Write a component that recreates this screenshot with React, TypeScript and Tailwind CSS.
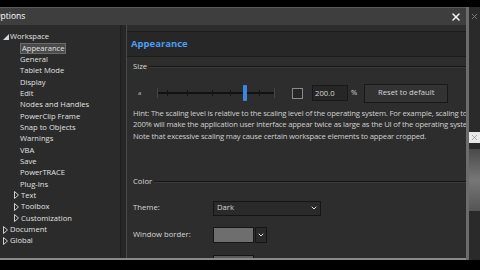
import { ChevronDown, X } from "lucide-react"

const font = { fontFamily: '"Open Sans", "Noto Sans", sans-serif' }

type Node = { label: string; level: number; state?: "open" | "closed"; selected?: boolean }

const tree: Node[] = [
  { label: "Workspace", level: 0, state: "open" },
  { label: "Appearance", level: 1, selected: true },
  { label: "General", level: 1 },
  { label: "Tablet Mode", level: 1 },
  { label: "Display", level: 1 },
  { label: "Edit", level: 1 },
  { label: "Nodes and Handles", level: 1 },
  { label: "PowerClip Frame", level: 1 },
  { label: "Snap to Objects", level: 1 },
  { label: "Warnings", level: 1 },
  { label: "VBA", level: 1 },
  { label: "Save", level: 1 },
  { label: "PowerTRACE", level: 1 },
  { label: "Plug-Ins", level: 1 },
  { label: "Text", level: 1, state: "closed" },
  { label: "Toolbox", level: 1, state: "closed" },
  { label: "Customization", level: 1, state: "closed" },
  { label: "Document", level: 0, state: "closed" },
  { label: "Global", level: 0, state: "closed" },
]

function Arrow({ state }: { state?: "open" | "closed" }) {
  if (state === "open")
    return (
      <svg width="6" height="6" viewBox="0 0 6 6" className="mr-[1px]">
        <polygon points="6,0 6,6 0,6" fill="#d8d8d8" />
      </svg>
    )
  if (state === "closed")
    return (
      <svg width="5" height="8" viewBox="0 0 5 8" className="mr-[2px]">
        <polygon points="0.5,0.5 4.5,4 0.5,7.5" fill="none" stroke="#cfcfcf" strokeWidth="1" />
      </svg>
    )
  return null
}

function Tree() {
  return (
    <div className="w-[120px] shrink-0 bg-[#2b2b2b] pt-[6px] text-[7.6px] text-[#e0e0e0]">
      {tree.map((n) => {
        const pad = n.level === 0 ? (n.state ? 3 : 10) : n.state ? 14 : 20
        return (
          <div key={n.label} className="flex h-[11.35px] items-center whitespace-nowrap" style={{ paddingLeft: pad }}>
            <Arrow state={n.state} />
            <span
              className={
                n.selected
                  ? "bg-[#4a4a4a] border border-[#6a6a6a] px-[1px] leading-[9px]"
                  : "leading-[9px]"
              }
            >
              {n.label}
            </span>
          </div>
        )
      })}
    </div>
  )
}

function GroupLabel({ text }: { text: string }) {
  return (
    <div className="flex items-center gap-[2px] pl-[6px] text-[7.7px] text-[#d8d8d8]">
      <span>{text}</span>
      <div className="flex-1 flex flex-col">
        <div className="h-px bg-[#171717]" />
        <div className="h-px bg-[#3a3a3a]" />
      </div>
    </div>
  )
}

function Slider() {
  const ticks = [10, 30, 55, 73, 102]
  return (
    <div className="relative w-[118px] h-[16px]">
      <div className="absolute left-0 right-0 top-[7px] h-[2px] bg-[#111]" />
      <div className="absolute left-0 top-[3px] w-px h-[10px] bg-[#444]" />
      <div className="absolute right-0 top-[3px] w-px h-[10px] bg-[#444]" />
      {ticks.map((t) => (
        <div key={t} className="absolute top-[5px] w-px h-[6px] bg-[#151515]" style={{ left: t }} />
      ))}
      <div className="absolute left-[86px] top-0 w-[4px] h-[16px] rounded-[1px] bg-[#3d86e0]" />
    </div>
  )
}

function Content() {
  return (
    <div className="flex-1 min-w-0 overflow-hidden bg-[#2d2d2d] border-l border-[#4a4a4a] pt-[6px] text-[#d6d6d6]">
      <div className="h-[26px] bg-[#272727] border-y border-[#1c1c1c] flex items-center pl-[4px]">
        <span className="text-[9.5px] font-bold text-[#4d9cf0]">Appearance</span>
      </div>
      <div className="mt-[4px]">
        <GroupLabel text="Size" />
      </div>
      <div className="flex items-center mt-[11px] h-[19px]">
        <span className="ml-[11px] w-[19px] text-[6px] text-[#bbb]">a</span>
        <Slider />
        <div className="ml-[17px] w-[11px] h-[11px] border border-[#8a8a8a] bg-[#262626]" />
        <div className="ml-[9px] w-[36px] h-[16px] border border-[#181818] bg-[#262626] pl-[2px] text-[7.7px] leading-[14px]">200.0</div>
        <span className="ml-[3px] text-[7.5px]">%</span>
        <div className="ml-[7px] w-[84px] h-[19px] border border-[#181818] bg-[#333] flex items-center justify-center text-[7.7px]">
          Reset to default
        </div>
      </div>
      <div className="mt-[5px] pl-[6px] whitespace-nowrap text-[7.7px] tracking-[-0.19px] leading-[11.5px] text-[#d0d0d0]">
        <div>Hint: The scaling level is relative to the scaling level of the operating system. For example, scaling to</div>
        <div>200% will make the application user interface appear twice as large as the UI of the operating system.</div>
        <div>Note that excessive scaling may cause certain workspace elements to appear cropped.</div>
      </div>
      <div className="mt-[34px]">
        <GroupLabel text="Color" />
      </div>
      <div className="flex items-center mt-[13px] text-[7.7px]">
        <span className="pl-[6px] w-[86px]">Theme:</span>
        <div className="w-[108px] h-[15px] border border-[#151515] bg-[#2a2a2a] flex items-center justify-between pl-[3px] pr-[2px]">
          <span>Dark</span>
          <ChevronDown size={8} strokeWidth={3} color="#e0e0e0" />
        </div>
      </div>
      <div className="flex items-center mt-[11px] text-[7.7px]">
        <span className="pl-[6px] w-[86px]">Window border:</span>
        <div className="w-[41px] h-[16px] border border-[#151515] bg-[#6e6e6e]" />
        <div className="ml-[1px] w-[12px] h-[16px] bg-[#2a2a2a] border border-[#151515] flex items-center justify-center">
          <ChevronDown size={8} strokeWidth={3} color="#e0e0e0" />
        </div>
      </div>
      <div className="flex items-center mt-[12px] text-[7.7px]">
        <span className="pl-[6px] w-[86px]">Desktop:</span>
        <div className="w-[41px] h-[16px] border border-[#151515] bg-[#5a5a5a]" />
      </div>
    </div>
  )
}

export default function App() {
  return (
    <div className="w-[480px] h-[270px] bg-black overflow-hidden flex flex-col" style={font}>
      <div className="h-[7px] shrink-0" />
      <div className="flex h-[253px] shrink-0">
        <div className="w-[466px] flex flex-col border-b-2 border-[#8a8a8a]">
          <div className="h-[18px] shrink-0 bg-[#3e3e3e] border-t border-[#5a5a5a] flex items-center justify-between pr-[4px]">
            <span className="ml-[-6px] text-[8.5px] text-white">Options</span>
            <X size={12} strokeWidth={3} color="#f0f0f0" />
          </div>
          <div className="flex flex-1 min-h-0 overflow-hidden bg-[#2b2b2b]">
            <Tree />
            <div className="w-[6px] shrink-0 bg-[#262626] border-l border-[#1e1e1e]" />
            <Content />
          </div>
        </div>
        <div className="w-[14px] flex flex-col bg-[#2a2a2a] border-l-[3px] border-[#6c6c6c]">
          <div className="h-[18px] flex items-center pl-[1px]">
            <X size={9} strokeWidth={2.5} color="#7a7a7a" />
          </div>
          <div className="mt-[107px] w-[11px] h-[11px] bg-[#e8e8e8] flex items-center justify-center">
            <X size={9} strokeWidth={1.5} color="#777" />
          </div>
          <div className="mt-[6px] h-[62px] bg-gradient-to-b from-[#4a4a4a] via-[#777] to-[#555]" />
        </div>
      </div>
    </div>
  )
}
